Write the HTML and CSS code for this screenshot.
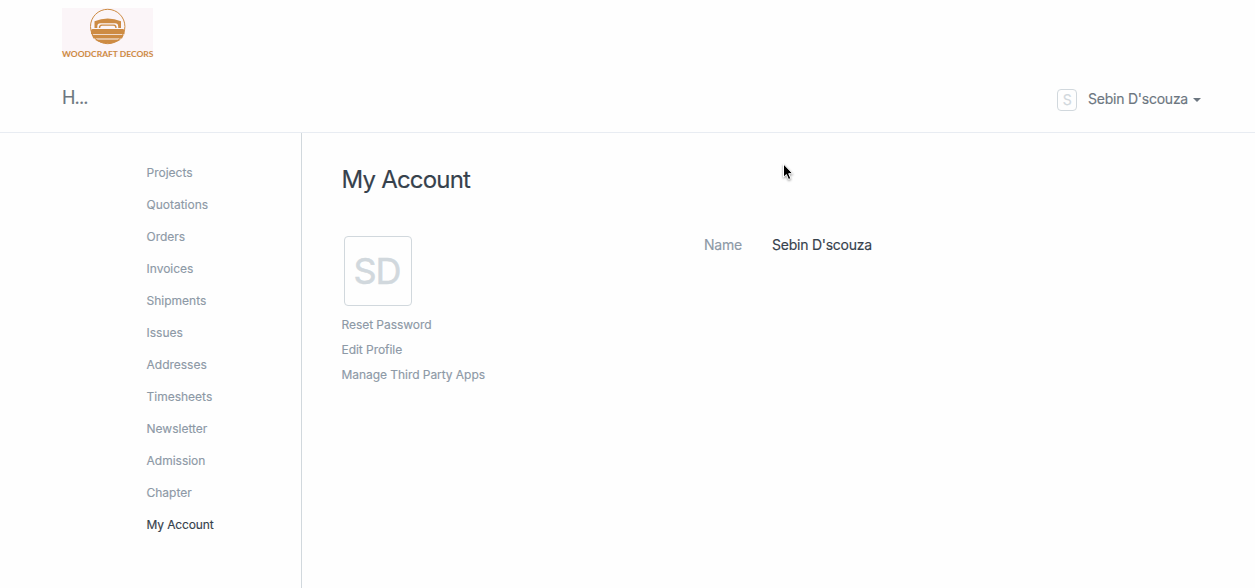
FILE: index.html
```html
<!DOCTYPE html>
<html lang="en">
<head>
<meta charset="utf-8">
<title>My Account</title>
<link rel="stylesheet" href="styles.css">
</head>
<body>
<header class="navbar">
  <a class="brand">
    <svg width="92" height="51" viewBox="0 0 92 51">
      <rect width="91" height="49" fill="#fbf5f8"/>
      <circle cx="45.700" cy="18.500" r="17.200" fill="none" stroke="#cd8b43" stroke-width="1"/>
      <g fill="#cd8b43">
        <path d="M32.500 20V13.200Q45.700 8 59 13.200V20H56.200V18.500Q56.200 15.200 53 15.200H38.500Q35.300 15.200 35.300 18.500V20Z"/>
        <path d="M36.800 20Q36.800 16.400 39.500 16.400H52Q54.700 16.400 54.700 20H53.300Q53.300 17.800 51.500 17.800H40Q38.200 17.800 38.200 20Z"/>
        <path d="M30.500 21H61Q62.500 21 62.500 23V26.300H29V23Q29 21 30.500 21Z"/>
        <path d="M29.800 26.900H61.700L60 30.600H31.500Z"/>
        <path d="M32.500 31.500H59Q53 35.600 45.700 35.600T32.500 31.500Z"/>
      </g>
      <text class="brand-name" x="0" y="48.800" textLength="91.500" lengthAdjust="spacingAndGlyphs">WOODCRAFT DECORS</text>
    </svg>
  </a>
  <div class="nav-row">
    <a class="home">H...</a>
    <div class="user"><span class="avatar-small">S</span><span class="user-name">Sebin D'scouza</span><span class="caret"></span></div>
  </div>
</header>
<div class="page">
  <nav class="sidebar">
    <a>Projects</a><a>Quotations</a><a>Orders</a><a>Invoices</a><a>Shipments</a><a>Issues</a><a>Addresses</a><a>Timesheets</a><a>Newsletter</a><a>Admission</a><a>Chapter</a><a class="active">My Account</a>
  </nav>
  <main class="content">
    <h1>My Account</h1>
    <div class="account">
      <section class="profile">
        <div class="avatar">SD</div>
        <a>Reset Password</a><a>Edit Profile</a><a>Manage Third Party Apps</a>
      </section>
      <dl class="details"><dt>Name</dt><dd>Sebin D'scouza</dd></dl>
    </div>
  </main>
</div>
<svg class="cursor" width="14" height="20" viewBox="0 0 14 20"><path d="M2.500 2V15.200L5.400 12.500L7.500 17.500L9.800 16.500L7.700 11.700H11.800Z" fill="#000" stroke="#fff" stroke-width="1"/></svg>
</body>
</html>
```
FILE: styles.css
```css
* { box-sizing: border-box; }
body {
  margin: 0;
  height: 588px;
  overflow: hidden;
  display: flex;
  flex-direction: column;
  background: #fefefe;
  color: #36414c;
  font-family: Inter, "Liberation Sans", sans-serif;
  font-size: 14px;
  letter-spacing: -0.24px;
  -webkit-text-stroke: 0.150px currentColor;
}
.navbar {
  height: 133px;
  padding: 8px 54px 0 62px;
  border-bottom: 1px solid #e8ecf2;
}
.brand { display: block; height: 50px; letter-spacing: 0; -webkit-text-stroke: 0; }
.brand svg { display: block; overflow: visible; }
.brand-name { font: 700 8.2px Lato, sans-serif; fill: #cd8b43; }
.nav-row {
  display: flex;
  justify-content: space-between;
  padding-top: 29px;
  color: #6c7680;
}
.home { font-size: 18px; line-height: 22px; letter-spacing: -0.8px; }
.user { display: flex; align-items: center; height: 26px; }
.user-name { margin-top: -4px; }
.avatar-small {
  width: 20px;
  height: 22px;
  margin-right: 11px;
  border: 1px solid #d1d8dd;
  border-radius: 4px;
  color: #d1d8dd;
  line-height: 20px;
  text-align: center;
}
.caret {
  margin: 0 0 0 5px;
  border: 4px solid transparent;
  border-top-color: #6c7680;
  border-bottom: 0;
}
.page { display: flex; flex: 1; }
.sidebar {
  display: flex;
  flex-direction: column;
  width: 302px;
  padding: 24px 0 0 146.500px;
  border-right: 1px solid #d1d8dd;
  color: #8d99a6;
  font-size: 12px;
  line-height: 32px;
  letter-spacing: 0;
}
.sidebar .active { color: #36414c; letter-spacing: -0.12px; }
.content { flex: 1; padding: 31px 40px 31px 39.500px; }
h1 { margin: 0; font-size: 24px; font-weight: 400; line-height: 32px; letter-spacing: -0.8px; }
.account { display: grid; grid-template-columns: 362.500px 1fr; padding-top: 40px; }
.profile {
  display: flex;
  flex-direction: column;
  color: #8d99a6;
  font-size: 12px;
  line-height: 25px;
  letter-spacing: -0.05px;
}
.avatar {
  width: 68px;
  height: 70px;
  margin: 0 0 6px 2.500px;
  padding-right: 2px;
  border: 1px solid #d1d8dd;
  border-radius: 4px;
  color: #d1d8dd;
  font-size: 36px;
  line-height: 69px;
  letter-spacing: -1px;
  text-align: center;
  -webkit-text-stroke: 0.500px #d1d8dd;
}
.details { display: flex; margin: 0; line-height: 18px; }
dt { width: 68px; color: #8d99a6; }
dd { margin: 0; }
.cursor { position: absolute; left: 781px; top: 162px; filter: drop-shadow(0 1px 1px #0006); }
```
